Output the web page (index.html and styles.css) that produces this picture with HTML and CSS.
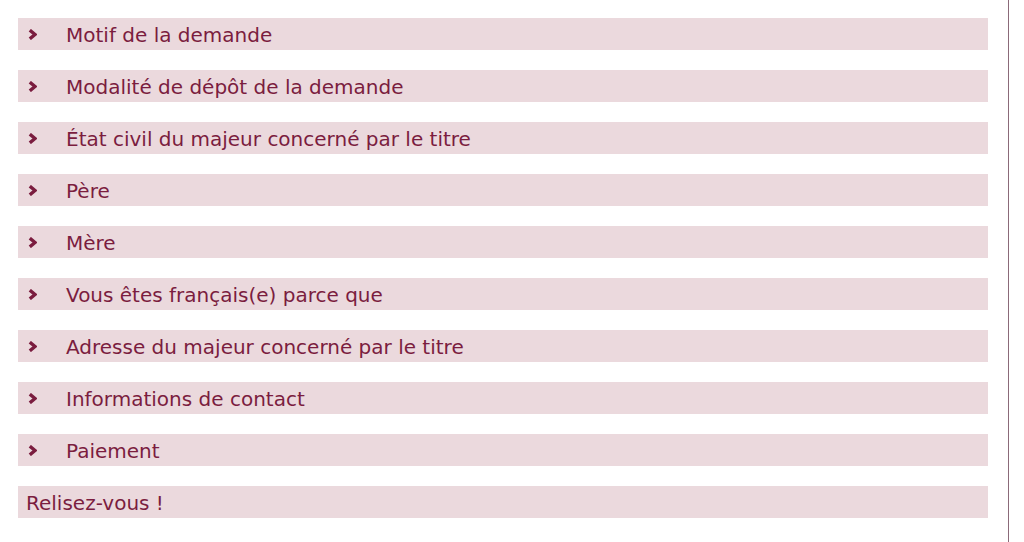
FILE: index.html
```html
<!DOCTYPE html>
<html lang="fr">
<head>
<meta charset="utf-8">
<title>Demande</title>
<link rel="stylesheet" href="styles.css">
</head>
<body>
<div class="page">
  <ul class="steps">
    <li class="step"><svg class="chev" viewBox="0 0 9 11"><polyline points="1.8,1.2 7,5.5 1.8,9.8"/></svg><span>Motif de la demande</span></li>
    <li class="step"><svg class="chev" viewBox="0 0 9 11"><polyline points="1.8,1.2 7,5.5 1.8,9.8"/></svg><span>Modalité de dépôt de la demande</span></li>
    <li class="step"><svg class="chev" viewBox="0 0 9 11"><polyline points="1.8,1.2 7,5.5 1.8,9.8"/></svg><span>État civil du majeur concerné par le titre</span></li>
    <li class="step"><svg class="chev" viewBox="0 0 9 11"><polyline points="1.8,1.2 7,5.5 1.8,9.8"/></svg><span>Père</span></li>
    <li class="step"><svg class="chev" viewBox="0 0 9 11"><polyline points="1.8,1.2 7,5.5 1.8,9.8"/></svg><span>Mère</span></li>
    <li class="step"><svg class="chev" viewBox="0 0 9 11"><polyline points="1.8,1.2 7,5.5 1.8,9.8"/></svg><span>Vous êtes français(e) parce que</span></li>
    <li class="step"><svg class="chev" viewBox="0 0 9 11"><polyline points="1.8,1.2 7,5.5 1.8,9.8"/></svg><span>Adresse du majeur concerné par le titre</span></li>
    <li class="step"><svg class="chev" viewBox="0 0 9 11"><polyline points="1.8,1.2 7,5.5 1.8,9.8"/></svg><span>Informations de contact</span></li>
    <li class="step"><svg class="chev" viewBox="0 0 9 11"><polyline points="1.8,1.2 7,5.5 1.8,9.8"/></svg><span>Paiement</span></li>
    <li class="step plain"><span>Relisez-vous !</span></li>
  </ul>
</div>
</body>
</html>
```
FILE: styles.css
```css
html, body {
  margin: 0;
  padding: 0;
  background: #ffffff;
}
body {
  font-family: "DejaVu Sans", Verdana, sans-serif;
  color: #7b1d3f;
}
.page {
  width: 1009px;
  height: 542px;
  border-right: 1px solid #8b6a79;
  padding: 18px 20px 0 18px;
  box-sizing: border-box;
}
.steps {
  list-style: none;
  margin: 0;
  padding: 0;
  display: flex;
  flex-direction: column;
  gap: 20px;
}
.step {
  height: 32px;
  box-sizing: border-box;
  padding: 2px 0 0 10px;
  background: #ebd9dd;
  display: flex;
  align-items: center;
  font-size: 20px;
  line-height: 30px;
}
.step.plain {
  padding-left: 8px;
}
.chev {
  width: 9px;
  height: 11px;
  margin: 0 29px 2px 0;
  flex: none;
}
.chev polyline {
  fill: none;
  stroke: #7b1d3f;
  stroke-width: 3.4;
  stroke-linecap: butt;
  stroke-linejoin: miter;
}
```
